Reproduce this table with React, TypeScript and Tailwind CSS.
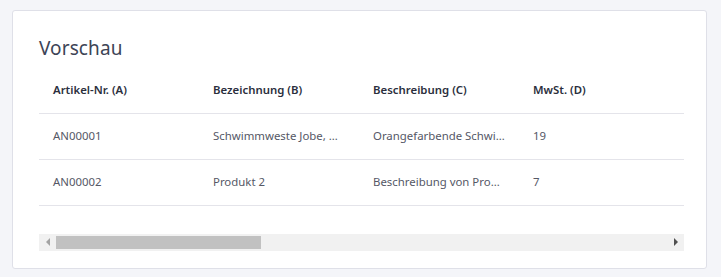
import React from "react";

const columns = ["Artikel-Nr. (A)", "Bezeichnung (B)", "Beschreibung (C)", "MwSt. (D)"];

const rows = [
  ["AN00001", "Schwimmweste Jobe, Gelb", "Orangefarbende Schwimmweste", "19"],
  ["AN00002", "Produkt 2", "Beschreibung von Produkt 2", "7"],
];

export default function App() {
  return (
    <div
      className="min-h-screen bg-[#f4f5f9] pt-[10px] px-[12px]"
      style={{ fontFamily: '"Noto Sans", "Open Sans", sans-serif' }}
    >
      {/* Vorschau-Karte */}
      <div className="w-[695px] h-[259px] bg-white border border-[#dfe0e8] rounded-[3px] pl-[26px] pr-[22px] pt-[25px]">
        <h2 className="text-[19px] leading-[24px] text-[#3d4456] tracking-[0.1px]">Vorschau</h2>

        <div className="mt-[7px] overflow-hidden">
          <table className="table-fixed border-collapse w-full text-[11.4px]">
            <thead>
              <tr className="h-[46px] border-b border-[#e4e4ea]">
                {columns.map((c) => (
                  <th key={c} className="w-[160px] px-[14px] text-left font-semibold text-[#2b2f3d]">
                    {c}
                  </th>
                ))}
                <th />
              </tr>
            </thead>
            <tbody>
              {rows.map((r) => (
                <tr key={r[0]} className="h-[46px] border-b border-[#e4e4ea]">
                  {r.map((v, i) => (
                    <td key={i} className="w-[160px] px-[14px] text-[#555866] truncate">
                      {v}
                    </td>
                  ))}
                  <td />
                </tr>
              ))}
            </tbody>
          </table>
        </div>

        {/* horizontale Scrollleiste */}
        <div className="mt-[28px] h-[17px] bg-[#f1f1f1] flex items-center">
          <div className="w-[17px] h-full flex items-center justify-center">
            <div className="w-0 h-0 border-y-[4px] border-y-transparent border-r-[4px] border-r-[#a3a3a3]" />
          </div>
          <div className="flex-1 h-full py-[2px]">
            <div className="w-[205px] h-full bg-[#c1c1c1]" />
          </div>
          <div className="w-[17px] h-full flex items-center justify-center">
            <div className="w-0 h-0 border-y-[4px] border-y-transparent border-l-[4px] border-l-[#505050]" />
          </div>
        </div>
      </div>
    </div>
  );
}
